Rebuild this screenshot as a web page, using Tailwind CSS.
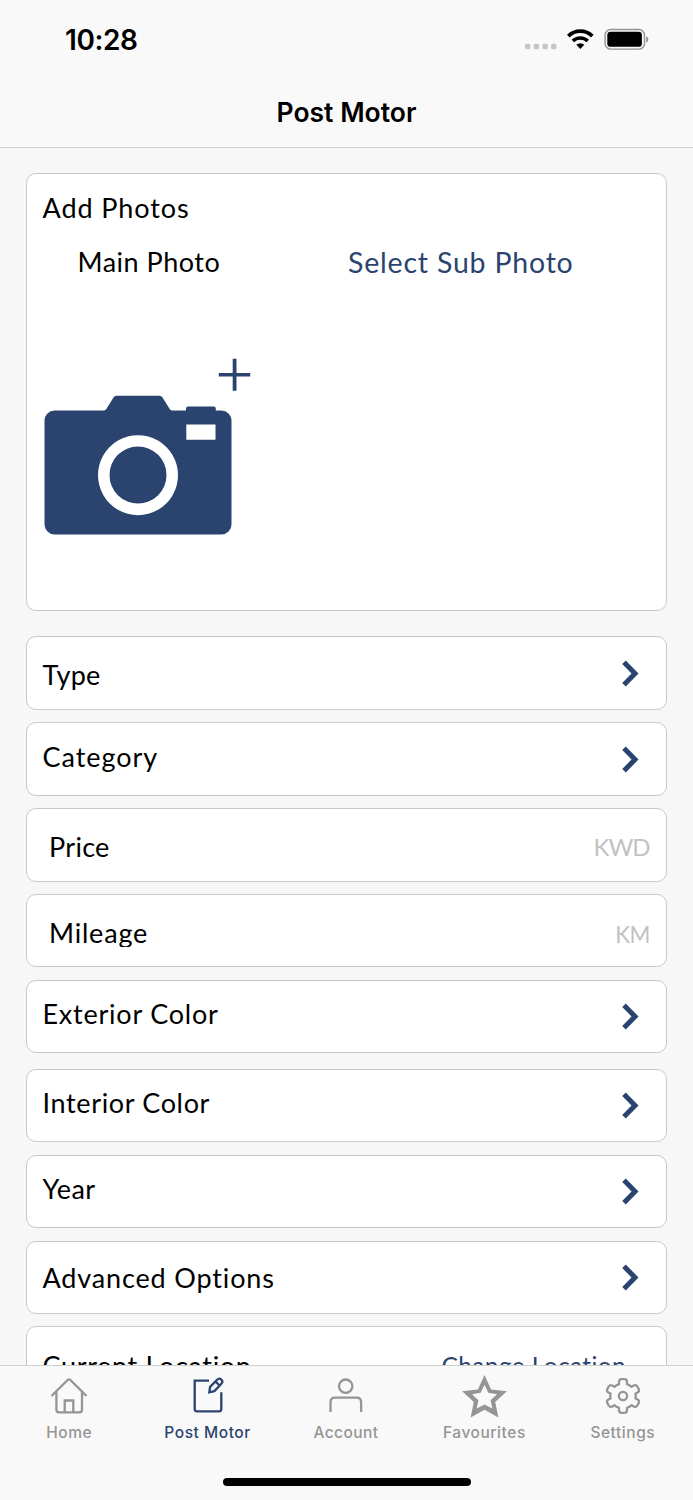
<!DOCTYPE html>
<html lang="en">
<head>
<meta charset="utf-8">
<title>Post Motor</title>
<script src="https://cdn.jsdelivr.net/npm/@tailwindcss/browser@4"></script>
</head>
<body class="bg-[#f7f7f7]">
<div class="w-[693px] h-[1500px] overflow-hidden flex flex-col font-['Lato','Liberation_Sans',sans-serif] text-[27px] leading-[32px] text-black">

  <header class="h-[148px] shrink-0 bg-[#f9f9f9] border-b border-[#cfcfcf] font-['Inter',sans-serif]">
    <div class="h-20 pl-[65px] pr-[41px] flex items-start justify-between">
      <span class="mt-6 text-[28px] leading-[32px] font-semibold tracking-[-0.4px]">10:28</span>
      <svg class="mt-6 w-[128px] h-8" viewBox="524 24 128 32" fill="none">
        <g fill="#c5c5c5"><rect x="525" y="43.8" width="5.4" height="5.4" rx="1.6"/><rect x="533.7" y="43.8" width="5.4" height="5.4" rx="1.6"/><rect x="542.4" y="43.8" width="5.4" height="5.4" rx="1.6"/><rect x="551.1" y="43.8" width="5.4" height="5.4" rx="1.6"/></g>
        <path d="M568.3 36.1a17 17 0 0 1 24 0M572.9 41a10.6 10.6 0 0 1 14.8 0" stroke="#000" stroke-width="3.7"/>
        <path d="M576.3 44.8a6 6 0 0 1 8 0L580.3 49z" fill="#000"/>
        <rect x="605.1" y="29.5" width="39.4" height="19.6" rx="5.6" stroke="#929292" stroke-width="1.4"/>
        <rect x="607.3" y="31.8" width="34.6" height="15" rx="3.4" fill="#000"/>
        <path d="M646.2 36.2c2.8 1 2.8 5.4 0 6.4z" fill="#929292"/>
      </svg>
    </div>
    <h1 class="mt-4 text-center text-[26.5px] leading-[32px] font-semibold tracking-[0px]">Post Motor</h1>
  </header>

  <main class="h-[1217px] shrink-0 overflow-hidden px-[26px] pt-[25px] flex flex-col">
    <section class="h-[438px] shrink-0 bg-white border border-[#c8c8c8] rounded-[10px] pt-[18px] pl-4">
      <h2 class="-ml-[0.5px] tracking-[0.9px]">Add Photos</h2>
      <div class="flex mt-[22px] pl-[34.5px]">
        <span class="w-[270.5px] tracking-[0.5px]">Main Photo</span>
        <span class="text-[28.5px] text-[#2b446f] tracking-[0.8px]">Select Sub Photo</span>
      </div>
      <svg class="mt-[78px] w-[210px] h-[180px]" viewBox="43 356 210 180" fill="#2b446f">
        <path d="M232.700 358.700h3.8v14.200h13.700v3.600h-13.700V390.700h-3.800v-14.200h-13.900v-3.600h13.900z"/>
        <path fill-rule="evenodd" d="M54.500 410.500H104q1.500-.2 2.300-1.600l7.200-11.400q1-1.700 3-1.700h43q2 0 3 1.700l7.200 11.400q.8 1.400 2.300 1.600H186v-2q0-2 2-2h25.800q2 0 2 2v2h5.700a10 10 0 0 1 10 10v104a10 10 0 0 1-10 10h-167a10 10 0 0 1-10-10v-104a10 10 0 0 1 10-10zM186.300 424.500v15.200h29.200v-15.200zM138 435.200a40 40 0 1 0 .01 0z"/>
        <circle cx="138" cy="475" r="28.500"/>
      </svg>
    </section>

    <div class="mt-[25px] flex flex-col gap-[13px]">
      <div class="h-[74px] -mb-px shrink-0 bg-white border border-[#c8c8c8] rounded-[10px] pl-[15.5px] pr-[27.5px] pt-[22px] flex items-start justify-between">
        <span class="tracking-[0.3px]">Type</span>
        <svg class="mt-px w-[17px] h-7" viewBox="0 0 17 28" fill="none" stroke="#2b446f" stroke-width="5"><path d="M2 2.300 13 13.500 2 24.700"/></svg>
      </div>
      <div class="h-[74px] -mb-px shrink-0 bg-white border border-[#c8c8c8] rounded-[10px] pl-[15.5px] pr-[27.5px] pt-[18px] flex items-start justify-between">
        <span class="tracking-[0.95px]">Category</span>
        <svg class="mt-[5px] w-[17px] h-7" viewBox="0 0 17 28" fill="none" stroke="#2b446f" stroke-width="5"><path d="M2 2.300 13 13.500 2 24.700"/></svg>
      </div>
      <div class="h-[74px] -mb-px shrink-0 bg-white border border-[#c8c8c8] rounded-[10px] pl-[22px] pr-4 pt-[22px] flex items-start justify-between">
        <span class="tracking-[0.3px]">Price</span>
        <span class="mr-[0.5px] text-[24px] text-[#c2c2c2] tracking-[-1px]">KWD</span>
      </div>
      <div class="h-[73px] shrink-0 bg-white border border-[#c8c8c8] rounded-[10px] pl-[22px] pr-4 pt-[22px] flex items-start justify-between">
        <span class="h-[30px] overflow-hidden tracking-[0.8px]">Mileage</span>
        <span class="mt-[2px] text-[22.5px] text-[#c2c2c2] tracking-[-0.5px]">KM</span>
      </div>
      <div class="h-[73px] shrink-0 bg-white border border-[#c8c8c8] rounded-[10px] pl-[15.5px] pr-[27.5px] pt-[17px] flex items-start justify-between">
        <span class="tracking-[0.77px]">Exterior Color</span>
        <svg class="mt-[5px] w-[17px] h-7" viewBox="0 0 17 28" fill="none" stroke="#2b446f" stroke-width="5"><path d="M2 2.300 13 13.500 2 24.700"/></svg>
      </div>
      <div class="mt-[3px] h-[73px] shrink-0 bg-white border border-[#c8c8c8] rounded-[10px] pl-[15.5px] pr-[27.5px] pt-[17px] flex items-start justify-between">
        <span class="tracking-[0.65px]">Interior Color</span>
        <svg class="mt-[5px] w-[17px] h-7" viewBox="0 0 17 28" fill="none" stroke="#2b446f" stroke-width="5"><path d="M2 2.300 13 13.500 2 24.700"/></svg>
      </div>
      <div class="h-[73px] shrink-0 bg-white border border-[#c8c8c8] rounded-[10px] pl-[15.5px] pr-[27.5px] pt-[17px] flex items-start justify-between">
        <span class="tracking-[0.4px]">Year</span>
        <svg class="mt-[5px] w-[17px] h-7" viewBox="0 0 17 28" fill="none" stroke="#2b446f" stroke-width="5"><path d="M2 2.300 13 13.500 2 24.700"/></svg>
      </div>
      <div class="h-[73px] shrink-0 bg-white border border-[#c8c8c8] rounded-[10px] pl-[15.5px] pr-[27.5px] pt-[20px] flex items-start justify-between">
        <span class="tracking-[0.85px]">Advanced Options</span>
        <svg class="mt-[2px] w-[17px] h-7" viewBox="0 0 17 28" fill="none" stroke="#2b446f" stroke-width="5"><path d="M2 2.300 13 13.500 2 24.700"/></svg>
      </div>
      <div class="-mt-px h-[73px] shrink-0 bg-white border border-[#c8c8c8] rounded-[10px] pl-[15.5px] pr-[40px] pt-[23px] flex items-start justify-between">
        <span class="tracking-[0.65px]">Current Location</span>
        <span class="text-[24.500px] text-[#2b446f] tracking-[0.35px]">Change Location</span>
      </div>
    </div>
  </main>

  <nav class="h-[135px] shrink-0 bg-[#f9f9f9] border-t border-[#cfcfcf] flex flex-col items-center font-['Inter',sans-serif] text-[15.500px] leading-5 font-medium text-[#959595]">
    <div class="w-[692px] self-start grid grid-cols-5 pt-[6px]">
      <a class="flex flex-col items-center">
        <svg class="w-12 h-12" viewBox="45 1372 48 48" fill="none" stroke="#959595" stroke-width="2.300"><path d="M51.500 1396 67.600 1380q1.400-1.400 2.800 0L86.500 1396M56.400 1391.500v18.300q0 2.500 2.500 2.500h20.600q2.500 0 2.500-2.500v-18.300M64.700 1412v-11.500h8.600v11.500"/></svg>
        <span class="mt-[3px] tracking-[0.5px]">Home</span>
      </a>
      <a class="flex flex-col items-center text-[#2b446f]">
        <svg class="w-12 h-12" viewBox="183 1372 48 48" fill="none" stroke="#2b446f" stroke-width="2.300"><path d="M208 1380.700h-14.300v28.300q0 2.400 2.400 2.400h21.800q2.400 0 2.400-2.400v-16.700"/><path d="M208.300 1392.300l.8-5.400 7-7.200a2.900 2.900 0 0 1 4.300 4.100l-7 7.300zM214.600 1381.600l4 3.900"/></svg>
        <span class="mt-[3px] tracking-[0.55px]">Post Motor</span>
      </a>
      <a class="flex flex-col items-center">
        <svg class="w-12 h-12" viewBox="321.500 1372 48 48" fill="none" stroke="#959595" stroke-width="2.300"><circle cx="345.200" cy="1386.200" r="6.700"/><path d="M330 1412v-9.800q0-4.500 4.500-4.500h21.600q4.500 0 4.500 4.500v9.800"/></svg>
        <span class="mt-[3px] tracking-[0.45px]">Account</span>
      </a>
      <a class="flex flex-col items-center">
        <svg class="w-12 h-12" viewBox="460 1372 48 48" fill="#959595"><path fill-rule="evenodd" d="M484.500 1375l6.600 14.400 15.700 1.900-11.600 10.700 3.200 15.500-13.900-7.700-13.900 7.700 3.200-15.500-11.600-10.700 15.700-1.900zM484.500 1384.800l-3.800 8-8.700 1.400 6.400 6-1.700 8.400 7.800-4.200 7.800 4.200-1.700-8.400 6.400-6-8.700-1.400z"/></svg>
        <span class="mt-[3px] tracking-[0.55px]">Favourites</span>
      </a>
      <a class="flex flex-col items-center">
        <svg class="w-12 h-12" viewBox="598.300 1372 48 48" fill="none" stroke="#959595" stroke-width="2.300" stroke-linejoin="round"><circle cx="622.300" cy="1396" r="4.100"/><path d="M618.300 1381.800q0-2.600 2.600-2.600h2.800q2.600 0 2.600 2.600v2.400q2.600.8 4.600 2.600l2.200-1.300q2.200-1.200 3.500 1l1.300 2.400q1.300 2.200-1 3.500l-2.100 1.200q.6 2.400 0 4.800l2.100 1.200q2.300 1.300 1 3.500l-1.300 2.400q-1.300 2.200-3.500 1l-2.200-1.300q-2 1.800-4.600 2.600v2.400q0 2.600-2.600 2.600h-2.800q-2.600 0-2.600-2.600v-2.400q-2.600-.8-4.600-2.600l-2.200 1.300q-2.200 1.200-3.500-1l-1.300-2.400q-1.300-2.200 1-3.500l2.100-1.200q-.6-2.400 0-4.800l-2.100-1.200q-2.300-1.300-1-3.500l1.300-2.400q1.300-2.200 3.500-1l2.200 1.300q2-1.800 4.600-2.600z"/></svg>
        <span class="mt-[3px] tracking-[0.55px]">Settings</span>
      </a>
    </div>
    <div class="mt-[35px] w-[248px] h-2 rounded-full bg-black"></div>
  </nav>
</div>
</body>
</html>
